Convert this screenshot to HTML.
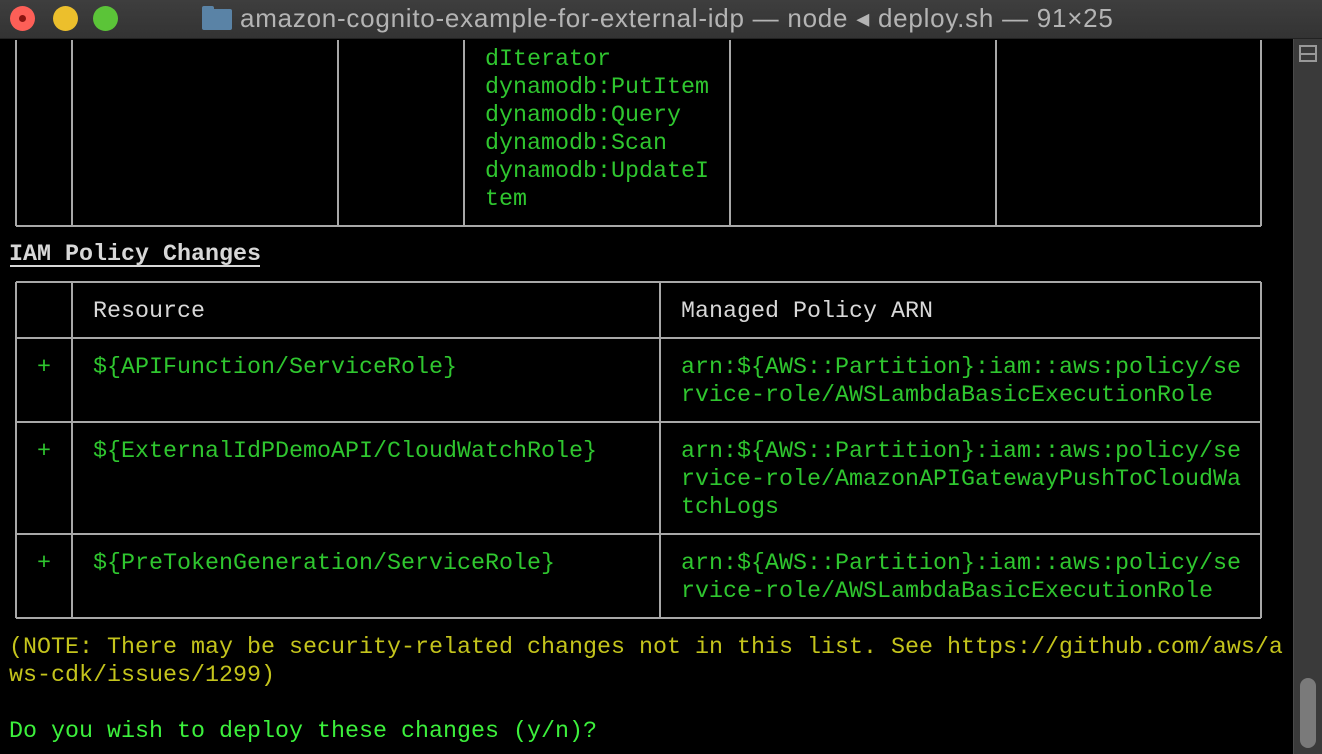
<!DOCTYPE html>
<html><head><meta charset="utf-8"><style>
html,body{margin:0;padding:0;background:#000;width:1322px;height:754px;overflow:hidden;position:relative}
#tb{position:absolute;left:0;top:0;width:1322px;height:38px;background:linear-gradient(#3e3e3e,#333);border-bottom:1px solid #222}
.dot{position:absolute;top:6px;width:25px;height:25px;border-radius:50%}
#title{position:absolute;left:240px;top:3px;font:26px "Liberation Sans",sans-serif;color:#b4b4b4;white-space:nowrap;letter-spacing:0.75px}
#folder{position:absolute;left:202px;top:9px;width:30px;height:21px;background:#5a83a6;border-radius:2px}
#folder:before{content:"";position:absolute;left:0;top:-3px;width:12px;height:5px;background:#5a83a6;border-radius:2px 2px 0 0}
#sb{position:absolute;left:1293px;top:39px;width:29px;height:715px;background:#3a3a3a;border-left:1px solid #4a4a4a}
#thumb{position:absolute;left:1300px;top:678px;width:16px;height:70px;background:#7a7a7a;border-radius:8px}
#ico{position:absolute;left:1299px;top:45px;width:18px;height:17px;border:2px solid #999;box-sizing:border-box}
#ico:after{content:"";position:absolute;left:0;right:0;top:5.5px;height:2px;background:#999}
.t{position:absolute;font:23.33px "Liberation Mono",monospace;white-space:pre;line-height:28px;height:28px}
.g{color:#2fc62f}.w{color:#d8d8d8}.y{color:#c4c41c}.b{color:#3cf03c}
#c{position:absolute;left:0;top:2px}
</style></head><body>
<div id="tb">
<div class="dot" style="left:10px;background:#fd5f57"></div>
<div style="position:absolute;left:19px;top:15px;width:7px;height:7px;border-radius:50%;background:#8a1410"></div>
<div class="dot" style="left:53px;background:#ecbf2c"></div>
<div class="dot" style="left:93px;background:#5bc438"></div>
<div id="folder"></div>
<div id="title">amazon-cognito-example-for-external-idp — node ◂ deploy.sh — 91×25</div>
</div>
<div id="sb"></div><div id="ico"></div><div id="thumb"></div>
<svg width="1292" height="754" style="position:absolute;left:0;top:0" stroke="#a8a8a8" stroke-width="2" fill="none">
<path d="M16 40V226M72 40V226M338 40V226M464 40V226M730 40V226M996 40V226M1261 40V226M16 226H1261"/>
<path d="M16 282H1261M16 338H1261M16 422H1261M16 534H1261M16 618H1261M16 282V618M72 282V618M660 282V618M1261 282V618"/>
<path d="M10 266H260" stroke="#d8d8d8"/>
</svg>
<div id="c">
<div class="t g" style="left:485px;top:44px">dIterator</div>
<div class="t g" style="left:485px;top:72px">dynamodb:PutItem</div>
<div class="t g" style="left:485px;top:100px">dynamodb:Query</div>
<div class="t g" style="left:485px;top:128px">dynamodb:Scan</div>
<div class="t g" style="left:485px;top:156px">dynamodb:UpdateI</div>
<div class="t g" style="left:485px;top:184px">tem</div>
<div class="t w" style="left:9px;top:239px;font-weight:bold">IAM Policy Changes</div>
<div class="t w" style="left:93px;top:296px">Resource</div>
<div class="t w" style="left:681px;top:296px">Managed Policy ARN</div>
<div class="t g" style="left:37px;top:352px">+</div>
<div class="t g" style="left:93px;top:352px">${APIFunction/ServiceRole}</div>
<div class="t g" style="left:681px;top:352px">arn:${AWS::Partition}:iam::aws:policy/se</div>
<div class="t g" style="left:681px;top:380px">rvice-role/AWSLambdaBasicExecutionRole</div>
<div class="t g" style="left:37px;top:436px">+</div>
<div class="t g" style="left:93px;top:436px">${ExternalIdPDemoAPI/CloudWatchRole}</div>
<div class="t g" style="left:681px;top:436px">arn:${AWS::Partition}:iam::aws:policy/se</div>
<div class="t g" style="left:681px;top:464px">rvice-role/AmazonAPIGatewayPushToCloudWa</div>
<div class="t g" style="left:681px;top:492px">tchLogs</div>
<div class="t g" style="left:37px;top:548px">+</div>
<div class="t g" style="left:93px;top:548px">${PreTokenGeneration/ServiceRole}</div>
<div class="t g" style="left:681px;top:548px">arn:${AWS::Partition}:iam::aws:policy/se</div>
<div class="t g" style="left:681px;top:576px">rvice-role/AWSLambdaBasicExecutionRole</div>
<div class="t y" style="left:9px;top:632px">(NOTE: There may be security-related changes not in this list. See https://github.com/aws/a</div>
<div class="t y" style="left:9px;top:660px">ws-cdk/issues/1299)</div>
<div class="t b" style="left:9px;top:716px">Do you wish to deploy these changes (y/n)?</div>
</div>
</body></html>
